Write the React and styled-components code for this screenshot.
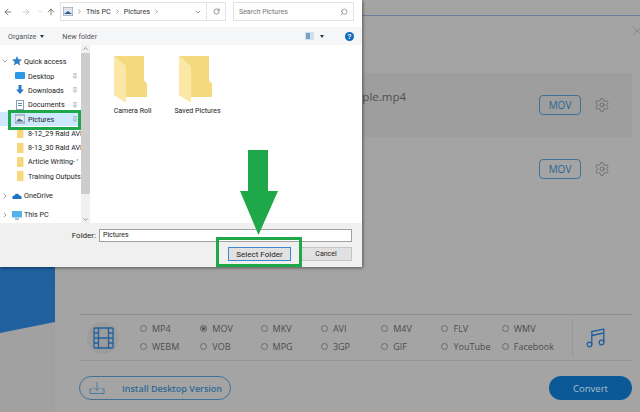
import React from "react";
import styled, { createGlobalStyle } from "styled-components";
import { ArrowLeft, ArrowRight, ArrowUp, ChevronDown, ChevronUp, ChevronRight, RotateCw, Search, Pin, Settings, X } from "lucide-react";

const Global = createGlobalStyle`
  html, body { margin: 0; padding: 0; width: 640px; height: 412px; overflow: hidden; }
  * { box-sizing: border-box; }
  body { font-family: "Open Sans", "Noto Sans", sans-serif; }
`;

const Page = styled.div`
  position: relative;
  width: 640px;
  height: 412px;
  overflow: hidden;
  display: flex;
  background: #a4a4a4;
`;
const Strip = styled.aside`
  width: 55px;
  flex: none;
  background: #a1a1a1;
`;
const BlueShape = styled.div`
  height: 333px;
  background: linear-gradient(170deg, #1c5c9f, #21619f);
  clip-path: polygon(0 0, 100% 0, 100% 322px, 0 333px);
`;
const Main = styled.main`
  flex: 1;
  display: flex;
  flex-direction: column;
`;
const TopBar = styled.header`
  height: 16px;
  flex: none;
  border-bottom: 1px solid #6d7c96;
`;
const Content = styled.div`
  flex: 1;
  display: flex;
  flex-direction: column;
  padding: 0 8px 12px 25px;
`;
const CloseRow = styled.div`
  height: 57px;
  flex: none;
  display: flex;
  justify-content: flex-end;
  align-items: flex-start;
  padding-top: 7px;
  margin-right: -13px;
  color: #7c7c7c;
`;
const FileRow = styled.div`
  height: 64px;
  flex: none;
  display: flex;
  align-items: center;
  padding-right: 22px;
  background: ${(p) => (p.$active ? "#9e9e9e" : "transparent")};
`;
const FileName = styled.div`
  flex: 1;
  padding-left: 259px;
  margin-top: -18px;
  font-size: 11.5px;
  color: #4f4f4f;
`;
const FormatButton = styled.button`
  width: 42px;
  height: 20px;
  padding: 0;
  margin-right: 13px;
  border: 1px solid #3f7296;
  border-radius: 4px;
  background: transparent;
  font: 10px "Open Sans", sans-serif;
  color: #2d668f;
`;
const GearIcon = styled(Settings)`
  width: 16px;
  height: 16px;
  color: #5a5a5a;
`;
const FormatBar = styled.section`
  margin-top: auto;
  height: 47px;
  flex: none;
  display: flex;
  align-items: center;
  border-top: 1px solid #8f8f8f;
  border-bottom: 1px solid #969696;
`;
const FilmBadge = styled.div`
  width: 32px;
  height: 32px;
  flex: none;
  margin-left: 7px;
  border-radius: 50%;
  background: #9c9c9c;
  display: flex;
  align-items: center;
  justify-content: center;
`;
const FormatGrid = styled.div`
  display: grid;
  grid-template-columns: repeat(7, 60.3px);
  grid-auto-rows: 18px;
  margin-left: 21px;
  width: 422px;
  flex: none;
`;
const Option = styled.div`
  display: flex;
  align-items: center;
  gap: 5px;
  font-size: 9px;
  color: #4c4c4c;
  white-space: nowrap;
`;
const Radio = styled.span`
  width: 7px;
  height: 7px;
  flex: none;
  border-radius: 50%;
  border: 1px solid #6b6b6b;
  background: ${(p) => (p.$on ? "#4b4b4b" : "transparent")};
  box-shadow: ${(p) => (p.$on ? "inset 0 0 0 1px #a4a4a4" : "none")};
`;
const BarDivider = styled.div`
  width: 1px;
  height: 38px;
  margin-left: 10px;
  background: #979797;
`;
const MusicWrap = styled.div`
  flex: 1;
  display: flex;
  justify-content: center;
  padding-right: 13px;
`;
const Footer = styled.footer`
  margin-top: 15px;
  height: 24px;
  flex: none;
  display: flex;
  justify-content: space-between;
`;
const InstallButton = styled.button`
  width: 152px;
  height: 24px;
  margin-left: -1px;
  padding: 0 0 0 9px;
  display: flex;
  align-items: center;
  gap: 17px;
  border: 1px solid #3f7296;
  border-radius: 12px;
  background: transparent;
  font: 600 9px "Open Sans", sans-serif;
  color: #2e6a93;
`;
const ConvertButton = styled.button`
  width: 83px;
  height: 24px;
  border: 0;
  border-radius: 12px;
  background: #0b5a97;
  font: 9.5px "Open Sans", sans-serif;
  color: #a9bfd1;
`;

/* Dialog window */
const Dialog = styled.div`
  position: absolute;
  left: 0;
  top: 0;
  width: 362px;
  height: 267px;
  display: flex;
  flex-direction: column;
  background: #fff;
  box-shadow: 1px 1px 3px rgba(0, 0, 0, 0.45);
  font-family: Roboto, "Liberation Sans", sans-serif;
  font-size: 7px;
  color: #222;
`;
const NavBar = styled.div`
  height: 27px;
  flex: none;
  display: flex;
  align-items: center;
  padding: 0 8px 4px 0;
  background: #fff;
`;
const NavIcon = styled.span`
  display: flex;
  width: ${(p) => p.$w || 13}px;
  justify-content: center;
  color: ${(p) => (p.$dim ? "#c4c4c4" : "#6a6a6a")};
`;
const Address = styled.div`
  width: 146px;
  height: 19px;
  margin-left: 2px;
  display: flex;
  align-items: center;
  gap: 3px;
  padding: 0 2px 0 2px;
  border: 1px solid #e3e3e3;
  border-right: 0;
  font-size: 7.2px;
  color: #333;
`;
const AddressEnd = styled(NavIcon)`
  margin-left: auto;
`;
const Crumb = styled.span`
  white-space: nowrap;
`;
const CrumbSep = styled(ChevronRight)`
  width: 7px;
  height: 7px;
  color: #666;
  flex: none;
`;
const RefreshBox = styled.div`
  width: 20px;
  height: 19px;
  display: flex;
  align-items: center;
  justify-content: center;
  border: 1px solid #e3e3e3;
  color: #555;
`;
const SearchBox = styled.div`
  width: 121px;
  height: 19px;
  margin-left: 7px;
  display: flex;
  align-items: center;
  justify-content: space-between;
  padding: 0 5px;
  border: 1px solid #e3e3e3;
  font-size: 7px;
  color: #777;
`;
const MirroredSearch = styled(Search)`
  transform: scaleX(-1);
`;
const ToolBar = styled.div`
  height: 18px;
  flex: none;
  display: flex;
  align-items: center;
  padding: 0 8px 0 8px;
  background: #f5f6f7;
  font-size: 7.2px;
  color: #555;
`;
const ToolItem = styled.span`
  display: flex;
  align-items: center;
  gap: 4px;
  margin-right: 18px;
  white-space: nowrap;
`;
const Caret = styled.span`
  width: 0;
  height: 0;
  border-left: 2.5px solid transparent;
  border-right: 2.5px solid transparent;
  border-top: 3px solid #333;
`;
const ToolEnd = styled.div`
  margin-left: auto;
  display: flex;
  align-items: center;
  gap: 6px;
`;
const HelpDot = styled.span`
  width: 9px;
  height: 9px;
  margin-left: 15px;
  border-radius: 50%;
  background: #0f6cbd;
  color: #fff;
  font: 700 7px/9px "Liberation Sans", sans-serif;
  text-align: center;
`;
const Body = styled.div`
  height: 178px;
  flex: none;
  display: flex;
`;
const Sidebar = styled.nav`
  width: 81px;
  flex: none;
  padding-top: 8px;
  overflow: hidden;
`;
const NavRow = styled.div`
  height: 14.3px;
  display: flex;
  align-items: center;
  padding-left: 15px;
  gap: 3px;
  white-space: nowrap;
  overflow: hidden;
  background: ${(p) => (p.$sel ? "#cde8ff" : "transparent")};
`;
const TopNavRow = styled(NavRow)`
  height: ${(p) => p.$h || 16}px;
  margin-top: ${(p) => p.$mt || 0}px;
  padding-left: 1px;
  gap: 2px;
`;
const Twisty = styled.span`
  display: flex;
  width: 9px;
  flex: none;
  color: #777;
`;
const NavLabel = styled.span`
  flex: 1;
  overflow: hidden;
  font-size: 7.2px;
`;
const PinMark = styled(Pin)`
  width: 6px;
  height: 6px;
  flex: none;
  margin-right: 3px;
  color: #888;
`;
const ScrollTrack = styled.div`
  width: 9px;
  flex: none;
  display: flex;
  flex-direction: column;
  align-items: center;
  background: #f0f0f0;
  color: #555;
`;
const ScrollThumb = styled.div`
  width: 100%;
  flex: 1;
  margin: 1px 0 22px;
  background: #cdcdcd;
`;
const Files = styled.div`
  flex: 1;
  display: flex;
  padding: 11px 0 0 10px;
`;
const Tile = styled.div`
  width: 65px;
  display: flex;
  flex-direction: column;
  align-items: center;
  gap: 3px;
  font-size: 7px;
  white-space: nowrap;
`;
const BottomBar = styled.div`
  flex: 1;
  background: #f0f0f0;
  padding: 6px 10px 0 0;
  display: flex;
  flex-direction: column;
`;
const FolderLine = styled.div`
  display: flex;
  align-items: center;
  justify-content: flex-end;
  gap: 3px;
  font-size: 8px;
`;
const FolderInput = styled.div`
  width: 253px;
  height: 13px;
  padding-left: 3px;
  background: #fff;
  border: 1px solid #a0a0a0;
  font-size: 7px;
  line-height: 11px;
`;
const ButtonLine = styled.div`
  margin-top: 5px;
  display: flex;
  justify-content: flex-end;
  gap: 9px;
`;
const DialogButton = styled.button`
  width: ${(p) => p.$w}px;
  height: 14px;
  padding: 0;
  background: #e1e1e1;
  border: 1px solid ${(p) => (p.$primary ? "#3a88d0" : "#c4c4c4")};
  font: ${(p) => (p.$primary ? 8 : 7)}px Roboto, sans-serif;
  color: #222;
`;

/* Annotations */
const Highlight = styled.div`
  position: absolute;
  left: ${(p) => p.$x}px;
  top: ${(p) => p.$y}px;
  width: ${(p) => p.$w}px;
  height: ${(p) => p.$h}px;
  border: 3px solid #1fa84a;
`;
const Arrow = styled.svg`
  position: absolute;
  left: 240px;
  top: 150px;
`;
const MiniSvg = styled.svg`
  flex: none;
`;

const Folder = () => (
  <svg width="38" height="48" viewBox="0 0 38 48">
    <path d="M0 0h30v24l3 4v13H10z" fill="#f5d97f" />
    <path d="M0 0l12 10v37L0 39z" fill="#fbe8a6" />
  </svg>
);
const Mini = ({ children }) => (
  <MiniSvg width="10" height="10" viewBox="0 0 10 10">{children}</MiniSvg>
);
const MiniFolder = () => <Mini><path d="M2 0h6.5v10H2z" fill="#f6d77c" /></Mini>;
const rows = ["8-12_29 Rald AVI", "8-13_30 Rald AVI", "Article Writing- '", "Training Outputs"];
const formats = ["MP4", "MOV", "MKV", "AVI", "M4V", "FLV", "WMV", "WEBM", "VOB", "MPG", "3GP", "GIF", "YouTube", "Facebook"];

export default function App() {
  return (
    <Page>
      <Global />
      <Strip><BlueShape /></Strip>
      <Main>
        <TopBar />
        <Content>
          <CloseRow><X size={16} strokeWidth={1} /></CloseRow>
          <FileRow $active>
            <FileName>Sample.mp4</FileName>
            <FormatButton>MOV</FormatButton>
            <GearIcon strokeWidth={1} />
          </FileRow>
          <FileRow>
            <FileName />
            <FormatButton>MOV</FormatButton>
            <GearIcon strokeWidth={1} />
          </FileRow>
          <FormatBar>
            <FilmBadge>
              <svg width="21" height="22" viewBox="0 0 21 22" fill="none" stroke="#20609f" strokeWidth="1.3">
                <rect x="1" y="1" width="19" height="20" rx="1" />
                <path d="M5.5 1v20M15.5 1v20M1 6h4.5M1 11h19M1 16h4.5M15.5 6H20M15.5 16H20" />
              </svg>
            </FilmBadge>
            <FormatGrid>
              {formats.map((f) => (
                <Option key={f}><Radio $on={f === "MOV"} />{f}</Option>
              ))}
            </FormatGrid>
            <BarDivider />
            <MusicWrap>
              <svg width="20" height="20" viewBox="0 0 20 20" fill="none" stroke="#1f5ea0" strokeWidth="1.3">
                <circle cx="3.5" cy="16.5" r="2.3" />
                <circle cx="15.5" cy="14.5" r="2.3" />
                <path d="M5.8 16.5V3.5L17.8 1v13.5M5.8 7.5l12-2.5" />
              </svg>
            </MusicWrap>
          </FormatBar>
          <Footer>
            <InstallButton>
              <svg width="16" height="14" viewBox="0 0 16 14" fill="none" stroke="#4a7a9c" strokeWidth="1">
                <path d="M8 1v8M5 6.5l3 3 3-3M3.5 8H1v4.5h14V8h-2.5" />
              </svg>
              Install Desktop Version
            </InstallButton>
            <ConvertButton>Convert</ConvertButton>
          </Footer>
        </Content>
      </Main>

      <Dialog>
        <NavBar>
          <NavIcon $w={16}><ArrowLeft size={10} /></NavIcon>
          <NavIcon $dim $w={20}><ArrowRight size={10} /></NavIcon>
          <NavIcon $dim $w={8}><ChevronDown size={7} /></NavIcon>
          <NavIcon $w={14}><ArrowUp size={10} /></NavIcon>
          <Address>
            <MiniSvg width="10" height="9" viewBox="0 0 10 9">
              <rect width="10" height="9" fill="#dfe8f2" stroke="#7b8fa6" strokeWidth="1" />
              <path d="M1 7l4-3 4 3z" fill="#345f92" />
            </MiniSvg>
            <CrumbSep />
            <Crumb>This PC</Crumb>
            <CrumbSep />
            <Crumb>Pictures</Crumb>
            <CrumbSep />
            <AddressEnd><ChevronDown size={8} /></AddressEnd>
          </Address>
          <RefreshBox><RotateCw size={7} /></RefreshBox>
          <SearchBox>
            Search Pictures
            <MirroredSearch size={8} />
          </SearchBox>
        </NavBar>
        <ToolBar>
          <ToolItem>Organize <Caret /></ToolItem>
          <ToolItem>New folder</ToolItem>
          <ToolEnd>
            <svg width="9" height="8" viewBox="0 0 9 8"><rect width="9" height="8" fill="#cfe0f0" /><path d="M1 2h4M1 4h4M1 6h4" stroke="#345f92" /></svg>
            <Caret />
            <HelpDot>?</HelpDot>
          </ToolEnd>
        </ToolBar>
        <Body>
          <Sidebar>
            <TopNavRow>
              <Twisty><ChevronDown size={8} /></Twisty>
              <Mini><path d="M5 0l1.4 3.3 3.600.3-2.700 2.300.9 3.600L5 7.600 1.800 9.500l.9-3.600L0 3.600l3.600-.3z" fill="#2f7fc4" /></Mini>
              <NavLabel>Quick access</NavLabel>
            </TopNavRow>
            <NavRow>
              <Mini><rect y="1" width="10" height="7" rx="1" fill="#2b9ae6" /></Mini>
              <NavLabel>Desktop</NavLabel><PinMark />
            </NavRow>
            <NavRow>
              <Mini><path d="M3.5 0h3v4.5H9L5 9 1 4.5h2.500z" fill="#2a78c8" /></Mini>
              <NavLabel>Downloads</NavLabel><PinMark />
            </NavRow>
            <NavRow>
              <Mini><rect x="1.5" y=".5" width="7" height="9" fill="#fff" stroke="#8aa0b5" /><path d="M3 3.5h4M3 5.5h4" stroke="#6a87a5" /></Mini>
              <NavLabel>Documents</NavLabel><PinMark />
            </NavRow>
            <NavRow $sel>
              <Mini><rect y="1" width="10" height="8" fill="#e4ebf2" stroke="#7b8fa6" /><path d="M1 7.5l3-3 5 3z" fill="#3c5f85" /></Mini>
              <NavLabel>Pictures</NavLabel><PinMark />
            </NavRow>
            {rows.map((r) => (
              <NavRow key={r}><MiniFolder /><NavLabel>{r}</NavLabel></NavRow>
            ))}
            <TopNavRow $h={19} $mt={3}>
              <Twisty><ChevronRight size={8} /></Twisty>
              <Mini><path d="M1 8c-1.500-1.500-.5-3.500 1.500-3.500C3 2 6.500 2 7.500 4.500 9.500 4.500 10.500 7 9 8z" fill="#1c74c4" /></Mini>
              <NavLabel>OneDrive</NavLabel>
            </TopNavRow>
            <TopNavRow $h={19}>
              <Twisty><ChevronRight size={8} /></Twisty>
              <Mini><rect y="1" width="10" height="6.5" fill="#53b2ec" /><path d="M3 9h4" stroke="#5a7a96" /></Mini>
              <NavLabel>This PC</NavLabel>
            </TopNavRow>
          </Sidebar>
          <ScrollTrack>
            <ChevronUp size={7} />
            <ScrollThumb />
            <ChevronDown size={7} />
          </ScrollTrack>
          <Files>
            <Tile><Folder />Camera Roll</Tile>
            <Tile><Folder />Saved Pictures</Tile>
          </Files>
        </Body>
        <BottomBar>
          <FolderLine>Folder: <FolderInput>Pictures</FolderInput></FolderLine>
          <ButtonLine>
            <DialogButton $primary $w={63}>Select Folder</DialogButton>
            <DialogButton $w={52}>Cancel</DialogButton>
          </ButtonLine>
        </BottomBar>
      </Dialog>

      <Highlight $x={8} $y={110} $w={73} $h={20} />
      <Highlight $x={216} $y={237} $w={86} $h={30} />
      <Arrow width="38" height="85" viewBox="0 0 38 85">
        <path d="M8 0h20v41h10L18.5 85 0 41h8z" fill="#1fa84a" />
      </Arrow>
    </Page>
  );
}
